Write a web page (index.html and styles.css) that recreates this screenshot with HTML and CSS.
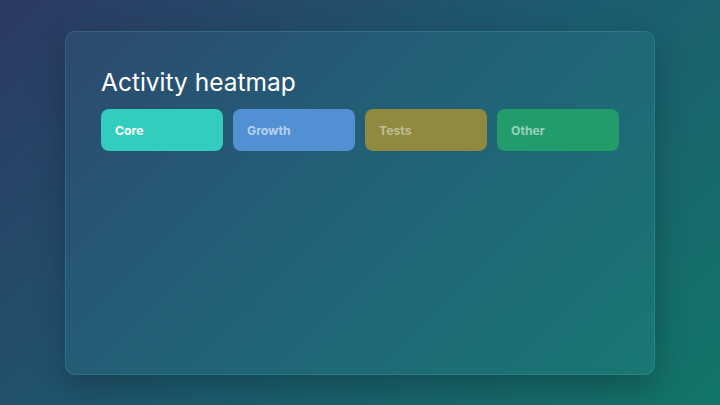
FILE: index.html
```html
<!DOCTYPE html>
<html>
<head>
<meta charset="utf-8">
<link rel="stylesheet" href="styles.css">
</head>
<body>
<main class="stage">
  <section class="card">
    <h1 class="title">Activity heatmap</h1>
    <div class="tiles">
      <div class="tile tile-core">Core</div>
      <div class="tile tile-growth">Growth</div>
      <div class="tile tile-tests">Tests</div>
      <div class="tile tile-other">Other</div>
    </div>
  </section>
</main>
</body>
</html>
```
FILE: styles.css
```css
* { box-sizing: border-box; }
html, body { margin: 0; padding: 0; }
body {
  width: 720px;
  height: 405px;
  overflow: hidden;
  font-family: "Inter", sans-serif;
  background: linear-gradient(135deg, #2c3963 0%, #1d5a70 50%, #127568 100%);
}
.stage {
  padding: 31px 65px;
  height: 405px;
}
.card {
  height: 344px;
  border-radius: 10px;
  border: 1px solid rgba(120,220,220,0.16);
  background: rgba(80,190,210,0.09);
  box-shadow: 0 12px 32px rgba(0,0,0,0.25);
  padding: 35px 35px;
  display: flex;
  flex-direction: column;
  gap: 12px;
}
.title {
  margin: 0;
  font-size: 24.5px;
  line-height: 30px;
  font-weight: 400;
  color: #ffffff;
}
.tiles {
  display: grid;
  grid-template-columns: repeat(4, 1fr);
  gap: 10px;
}
.tile {
  height: 42px;
  border-radius: 8px;
  padding: 0 14px;
  display: flex;
  align-items: center;
  font-size: 12.2px;
  font-weight: 700;
}
.tile-core { background: #33cdbf; color: #ffffff; }
.tile-growth { background: #5190d2; color: rgba(255,255,255,0.6); }
.tile-tests { background: #8f8a40; color: rgba(255,255,255,0.45); }
.tile-other { background: #239c6c; color: rgba(255,255,255,0.55); }
```
